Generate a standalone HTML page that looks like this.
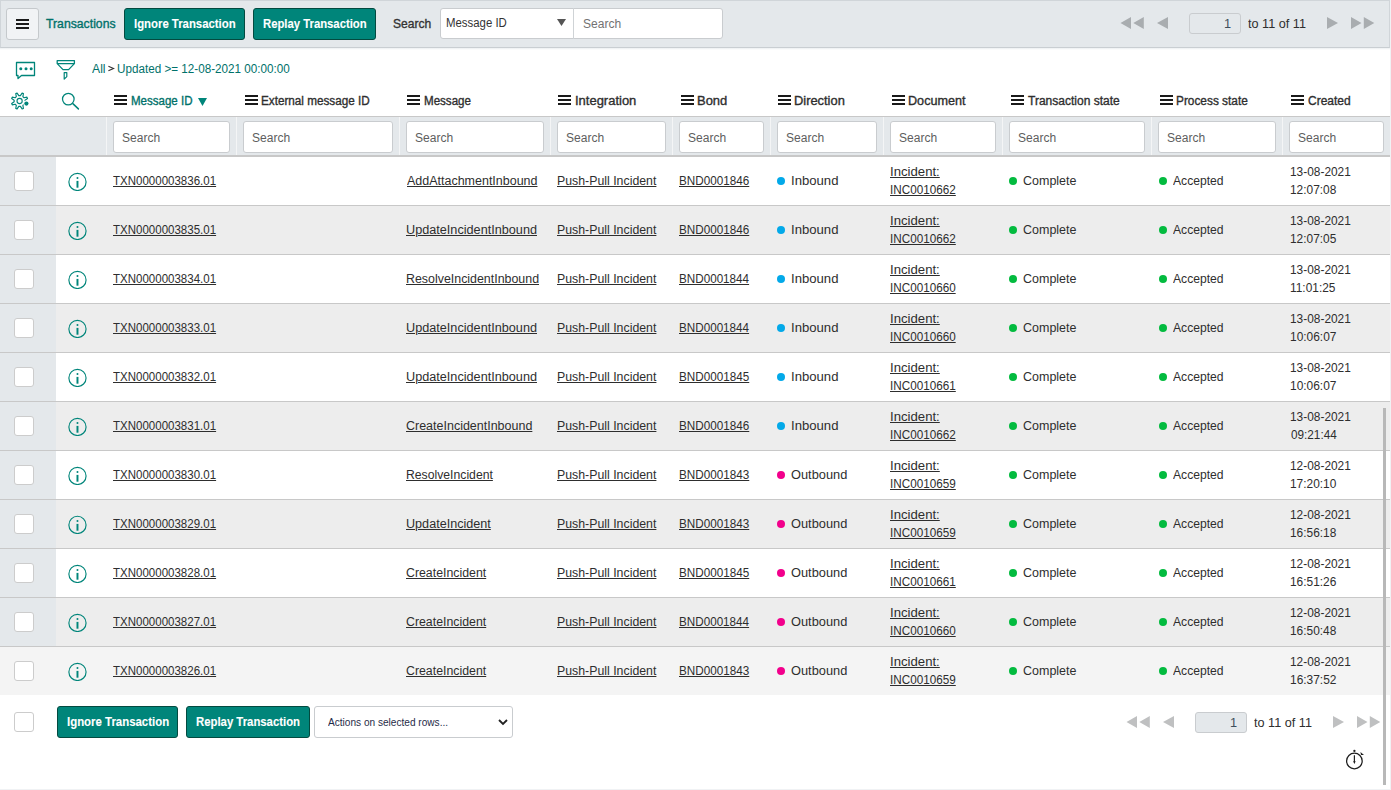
<!DOCTYPE html>
<html><head><meta charset="utf-8"><style>
html,body{margin:0;padding:0;width:1391px;height:790px;overflow:hidden;background:#fff}
body{position:relative;font-family:"Liberation Sans",sans-serif}
.t{position:absolute;white-space:nowrap;line-height:20px;transform-origin:0 0}
</style></head><body>
<div style="position:absolute;left:0px;top:0px;width:1391px;height:790px;background:#f0f2f4"></div>
<div style="position:absolute;left:0px;top:0px;width:1390px;height:789px;background:#fff"></div>
<div style="position:absolute;left:0px;top:0px;width:1390px;height:48px;background:#e4e8eb;border:1px solid #d0d5d9;box-sizing:border-box;border-bottom-color:#c9ced2"></div>
<div style="position:absolute;left:0px;top:48px;width:1390px;height:2px;background:linear-gradient(#eceff1,#fff)"></div>
<div style="position:absolute;left:6px;top:8px;width:33px;height:32px;background:#f1f3f5;border:1px solid #c5c9cc;border-radius:3px;box-sizing:border-box"></div>
<div style="position:absolute;left:16px;top:19px;width:13px;height:2px;background:#1a1a1a"></div>
<div style="position:absolute;left:16px;top:23px;width:13px;height:2px;background:#1a1a1a"></div>
<div style="position:absolute;left:16px;top:27px;width:13px;height:2px;background:#1a1a1a"></div>
<div class="t" style="left:45.5px;top:14px;font-size:12.5px;font-weight:normal;color:#00716a;transform:scaleX(0.9785);-webkit-text-stroke:0.35px #00716a;">Transactions</div>
<div style="position:absolute;left:124px;top:8px;width:121px;height:32px;background:#00857a;border:1px solid #034a40;border-radius:3px;box-sizing:border-box"></div>
<div class="t" style="left:133.5px;top:14px;font-size:12.5px;font-weight:bold;color:#fff;transform:scaleX(0.9089);-webkit-text-stroke:0.1px #fff;">Ignore Transaction</div>
<div style="position:absolute;left:253px;top:8px;width:123px;height:32px;background:#00857a;border:1px solid #034a40;border-radius:3px;box-sizing:border-box"></div>
<div class="t" style="left:262.9px;top:14px;font-size:12.5px;font-weight:bold;color:#fff;transform:scaleX(0.9041);-webkit-text-stroke:0.1px #fff;">Replay Transaction</div>
<div class="t" style="left:393.1px;top:14px;font-size:12.5px;font-weight:normal;color:#333;transform:scaleX(0.9653);-webkit-text-stroke:0.35px #333;">Search</div>
<div style="position:absolute;left:440px;top:8px;width:283px;height:31px;background:#fff;border:1px solid #c9cccf;border-radius:3px;box-sizing:border-box"></div>
<div style="position:absolute;left:573px;top:8px;width:1px;height:31px;background:#cfd3d6"></div>
<div class="t" style="left:445.6px;top:13px;font-size:12.5px;font-weight:normal;color:#333;transform:scaleX(0.9113);">Message ID</div>
<svg style="position:absolute;left:557px;top:19px" width="9" height="8"><path d="M0 0H9L4.5 7Z" fill="#555"/></svg>
<div class="t" style="left:582.5px;top:14px;font-size:12.5px;font-weight:normal;color:#727272;transform:scaleX(0.9627);">Search</div>
<svg style="position:absolute;left:1120px;top:17px" width="25" height="12"><path d="M0.5 6L11 0V12Z M13.3 6L23.8 0V12Z" fill="#a9adb0"/></svg>
<svg style="position:absolute;left:1157px;top:17px" width="11" height="12"><path d="M0 6L11 0V12Z" fill="#a9adb0"/></svg>
<div style="position:absolute;left:1189px;top:13px;width:52px;height:21px;background:#e4e8eb;border:1px solid #c9cccf;border-radius:3px;box-sizing:border-box"></div>
<div class="t" style="left:1223.5px;top:14px;font-size:12.5px;font-weight:normal;color:#3d4f5c;transform:scaleX(1.0205);">1</div>
<div class="t" style="left:1248.3px;top:14px;font-size:12.5px;font-weight:normal;color:#2e2e2e;transform:scaleX(1.0124);">to 11 of 11</div>
<svg style="position:absolute;left:1327px;top:17px" width="11" height="12"><path d="M11 6L0 0V12Z" fill="#a9adb0"/></svg>
<svg style="position:absolute;left:1351px;top:17px" width="25" height="12"><path d="M10.5 6L0 0V12Z M23.3 6L12.8 0V12Z" fill="#a9adb0"/></svg>
<svg style="position:absolute;left:15px;top:61px" width="22" height="19" viewBox="0 0 22 19">
<path d="M1.5 1.5H19.5V14.5H6.5L3 17.5V14.5H1.5Z" fill="none" stroke="#00857a" stroke-width="1.3" stroke-linejoin="round"/>
<circle cx="5.8" cy="7.7" r="1.5" fill="#00857a"/><circle cx="11" cy="7.7" r="1.5" fill="#00857a"/><circle cx="16.2" cy="7.7" r="1.5" fill="#00857a"/></svg>
<svg style="position:absolute;left:56px;top:59px" width="20" height="22" viewBox="0 0 20 22">
<path d="M1.2 1.6H18.4V4.6L12.6 10.6H7L1.2 4.6Z M1.2 4.6H18.4" fill="none" stroke="#00857a" stroke-width="1.3" stroke-linejoin="round"/>
<path d="M8.2 13.6H10.8V17.6L8.2 20.2Z" fill="none" stroke="#00857a" stroke-width="1.2" stroke-linejoin="round"/></svg>
<div class="t" style="left:92.4px;top:59px;font-size:12.5px;font-weight:normal;color:#00716a;transform:scaleX(0.9746);">All</div>
<svg style="position:absolute;left:107px;top:64px" width="9" height="9"><path d="M1.4 2.3L6.5 4.5L1.4 6.7" fill="none" stroke="#333" stroke-width="1.15"/></svg>
<div class="t" style="left:116.6px;top:59px;font-size:12.5px;font-weight:normal;color:#00716a;transform:scaleX(0.9350);">Updated &gt;= 12-08-2021 00:00:00</div>
<svg style="position:absolute;left:9px;top:91px" width="21" height="20" viewBox="0 0 21 20">
<path d="M11.41 4.56 L13.10 2.08 L14.43 2.64 L13.87 5.58 L15.02 6.73 L17.96 6.17 L18.52 7.50 L16.04 9.19 L16.04 10.81 L18.52 12.50 L17.96 13.83 L15.02 13.27 L13.87 14.42 L14.43 17.36 L13.10 17.92 L11.41 15.44 L9.79 15.44 L8.10 17.92 L6.77 17.36 L7.33 14.42 L6.18 13.27 L3.24 13.83 L2.68 12.50 L5.16 10.81 L5.16 9.19 L2.68 7.50 L3.24 6.17 L6.18 6.73 L7.33 5.58 L6.77 2.64 L8.10 2.08 L9.79 4.56Z" fill="none" stroke="#00857a" stroke-width="1.15" stroke-linejoin="round"/>
<circle cx="10.6" cy="10" r="2.6" fill="none" stroke="#00857a" stroke-width="1.1"/>
<circle cx="17.4" cy="12.6" r="3.1" fill="#fff"/><circle cx="17.4" cy="12.6" r="2.1" fill="#00857a"/></svg>
<svg style="position:absolute;left:60px;top:91px" width="22" height="20" viewBox="0 0 22 20">
<circle cx="8.3" cy="8.1" r="5.8" fill="none" stroke="#00857a" stroke-width="1.25"/>
<path d="M13.1 12.9L18.4 17.9" stroke="#00857a" stroke-width="1.5" stroke-linecap="round"/></svg>
<div style="position:absolute;left:114px;top:95px;width:13px;height:2px;background:#1a1a1a"></div>
<div style="position:absolute;left:114px;top:99px;width:13px;height:2px;background:#1a1a1a"></div>
<div style="position:absolute;left:114px;top:103px;width:13px;height:2px;background:#1a1a1a"></div>
<div class="t" style="left:130.6px;top:91px;font-size:12.5px;font-weight:normal;color:#00716a;transform:scaleX(0.9221);-webkit-text-stroke:0.35px #00716a;">Message ID</div>
<div style="position:absolute;left:245px;top:95px;width:13px;height:2px;background:#1a1a1a"></div>
<div style="position:absolute;left:245px;top:99px;width:13px;height:2px;background:#1a1a1a"></div>
<div style="position:absolute;left:245px;top:103px;width:13px;height:2px;background:#1a1a1a"></div>
<div class="t" style="left:261.0px;top:91px;font-size:12.5px;font-weight:normal;color:#2e2e2e;transform:scaleX(0.9371);-webkit-text-stroke:0.35px #2e2e2e;">External message ID</div>
<div style="position:absolute;left:407px;top:95px;width:13px;height:2px;background:#1a1a1a"></div>
<div style="position:absolute;left:407px;top:99px;width:13px;height:2px;background:#1a1a1a"></div>
<div style="position:absolute;left:407px;top:103px;width:13px;height:2px;background:#1a1a1a"></div>
<div class="t" style="left:423.6px;top:91px;font-size:12.5px;font-weight:normal;color:#2e2e2e;transform:scaleX(0.9259);-webkit-text-stroke:0.35px #2e2e2e;">Message</div>
<div style="position:absolute;left:558px;top:95px;width:13px;height:2px;background:#1a1a1a"></div>
<div style="position:absolute;left:558px;top:99px;width:13px;height:2px;background:#1a1a1a"></div>
<div style="position:absolute;left:558px;top:103px;width:13px;height:2px;background:#1a1a1a"></div>
<div class="t" style="left:574.5px;top:91px;font-size:12.5px;font-weight:normal;color:#2e2e2e;transform:scaleX(1.0384);-webkit-text-stroke:0.35px #2e2e2e;">Integration</div>
<div style="position:absolute;left:681px;top:95px;width:13px;height:2px;background:#1a1a1a"></div>
<div style="position:absolute;left:681px;top:99px;width:13px;height:2px;background:#1a1a1a"></div>
<div style="position:absolute;left:681px;top:103px;width:13px;height:2px;background:#1a1a1a"></div>
<div class="t" style="left:696.6px;top:91px;font-size:12.5px;font-weight:normal;color:#2e2e2e;transform:scaleX(1.0379);-webkit-text-stroke:0.35px #2e2e2e;">Bond</div>
<div style="position:absolute;left:778px;top:95px;width:13px;height:2px;background:#1a1a1a"></div>
<div style="position:absolute;left:778px;top:99px;width:13px;height:2px;background:#1a1a1a"></div>
<div style="position:absolute;left:778px;top:103px;width:13px;height:2px;background:#1a1a1a"></div>
<div class="t" style="left:794.2px;top:91px;font-size:12.5px;font-weight:normal;color:#2e2e2e;transform:scaleX(1.0298);-webkit-text-stroke:0.35px #2e2e2e;">Direction</div>
<div style="position:absolute;left:892px;top:95px;width:13px;height:2px;background:#1a1a1a"></div>
<div style="position:absolute;left:892px;top:99px;width:13px;height:2px;background:#1a1a1a"></div>
<div style="position:absolute;left:892px;top:103px;width:13px;height:2px;background:#1a1a1a"></div>
<div class="t" style="left:907.6px;top:91px;font-size:12.5px;font-weight:normal;color:#2e2e2e;transform:scaleX(1.0098);-webkit-text-stroke:0.35px #2e2e2e;">Document</div>
<div style="position:absolute;left:1011px;top:95px;width:13px;height:2px;background:#1a1a1a"></div>
<div style="position:absolute;left:1011px;top:99px;width:13px;height:2px;background:#1a1a1a"></div>
<div style="position:absolute;left:1011px;top:103px;width:13px;height:2px;background:#1a1a1a"></div>
<div class="t" style="left:1028.0px;top:91px;font-size:12.5px;font-weight:normal;color:#2e2e2e;transform:scaleX(0.9617);-webkit-text-stroke:0.35px #2e2e2e;">Transaction state</div>
<div style="position:absolute;left:1160px;top:95px;width:13px;height:2px;background:#1a1a1a"></div>
<div style="position:absolute;left:1160px;top:99px;width:13px;height:2px;background:#1a1a1a"></div>
<div style="position:absolute;left:1160px;top:103px;width:13px;height:2px;background:#1a1a1a"></div>
<div class="t" style="left:1176.2px;top:91px;font-size:12.5px;font-weight:normal;color:#2e2e2e;transform:scaleX(0.9481);-webkit-text-stroke:0.35px #2e2e2e;">Process state</div>
<div style="position:absolute;left:1291px;top:95px;width:13px;height:2px;background:#1a1a1a"></div>
<div style="position:absolute;left:1291px;top:99px;width:13px;height:2px;background:#1a1a1a"></div>
<div style="position:absolute;left:1291px;top:103px;width:13px;height:2px;background:#1a1a1a"></div>
<div class="t" style="left:1307.5px;top:91px;font-size:12.5px;font-weight:normal;color:#2e2e2e;transform:scaleX(0.9598);-webkit-text-stroke:0.35px #2e2e2e;">Created</div>
<svg style="position:absolute;left:198px;top:98px" width="9" height="8"><path d="M0 0H9L4.5 8Z" fill="#00857a"/></svg>
<div style="position:absolute;left:0px;top:116px;width:1390px;height:1px;background:#c8c8c8"></div>
<div style="position:absolute;left:0px;top:117px;width:1390px;height:38px;background:#e4e8eb"></div>
<div style="position:absolute;left:0px;top:155px;width:1390px;height:2px;background:#c8c8c8"></div>
<div style="position:absolute;left:106px;top:117px;width:1px;height:38px;background:#f4f5f6"></div>
<div style="position:absolute;left:113px;top:121px;width:117px;height:32px;background:#fff;border:1px solid #c9cccf;border-radius:3px;box-sizing:border-box"></div>
<div class="t" style="left:122.3px;top:128px;font-size:12.5px;font-weight:normal;color:#5e5e5e;transform:scaleX(0.9627);">Search</div>
<div style="position:absolute;left:236px;top:117px;width:1px;height:38px;background:#f4f5f6"></div>
<div style="position:absolute;left:243px;top:121px;width:150px;height:32px;background:#fff;border:1px solid #c9cccf;border-radius:3px;box-sizing:border-box"></div>
<div class="t" style="left:252.3px;top:128px;font-size:12.5px;font-weight:normal;color:#5e5e5e;transform:scaleX(0.9627);">Search</div>
<div style="position:absolute;left:399px;top:117px;width:1px;height:38px;background:#f4f5f6"></div>
<div style="position:absolute;left:406px;top:121px;width:138px;height:32px;background:#fff;border:1px solid #c9cccf;border-radius:3px;box-sizing:border-box"></div>
<div class="t" style="left:415.3px;top:128px;font-size:12.5px;font-weight:normal;color:#5e5e5e;transform:scaleX(0.9627);">Search</div>
<div style="position:absolute;left:550px;top:117px;width:1px;height:38px;background:#f4f5f6"></div>
<div style="position:absolute;left:557px;top:121px;width:109px;height:32px;background:#fff;border:1px solid #c9cccf;border-radius:3px;box-sizing:border-box"></div>
<div class="t" style="left:566.3px;top:128px;font-size:12.5px;font-weight:normal;color:#5e5e5e;transform:scaleX(0.9627);">Search</div>
<div style="position:absolute;left:672px;top:117px;width:1px;height:38px;background:#f4f5f6"></div>
<div style="position:absolute;left:679px;top:121px;width:85px;height:32px;background:#fff;border:1px solid #c9cccf;border-radius:3px;box-sizing:border-box"></div>
<div class="t" style="left:688.3px;top:128px;font-size:12.5px;font-weight:normal;color:#5e5e5e;transform:scaleX(0.9627);">Search</div>
<div style="position:absolute;left:770px;top:117px;width:1px;height:38px;background:#f4f5f6"></div>
<div style="position:absolute;left:777px;top:121px;width:100px;height:32px;background:#fff;border:1px solid #c9cccf;border-radius:3px;box-sizing:border-box"></div>
<div class="t" style="left:786.3px;top:128px;font-size:12.5px;font-weight:normal;color:#5e5e5e;transform:scaleX(0.9627);">Search</div>
<div style="position:absolute;left:883px;top:117px;width:1px;height:38px;background:#f4f5f6"></div>
<div style="position:absolute;left:890px;top:121px;width:106px;height:32px;background:#fff;border:1px solid #c9cccf;border-radius:3px;box-sizing:border-box"></div>
<div class="t" style="left:899.3px;top:128px;font-size:12.5px;font-weight:normal;color:#5e5e5e;transform:scaleX(0.9627);">Search</div>
<div style="position:absolute;left:1002px;top:117px;width:1px;height:38px;background:#f4f5f6"></div>
<div style="position:absolute;left:1009px;top:121px;width:136px;height:32px;background:#fff;border:1px solid #c9cccf;border-radius:3px;box-sizing:border-box"></div>
<div class="t" style="left:1018.3px;top:128px;font-size:12.5px;font-weight:normal;color:#5e5e5e;transform:scaleX(0.9627);">Search</div>
<div style="position:absolute;left:1151px;top:117px;width:1px;height:38px;background:#f4f5f6"></div>
<div style="position:absolute;left:1158px;top:121px;width:118px;height:32px;background:#fff;border:1px solid #c9cccf;border-radius:3px;box-sizing:border-box"></div>
<div class="t" style="left:1167.3px;top:128px;font-size:12.5px;font-weight:normal;color:#5e5e5e;transform:scaleX(0.9627);">Search</div>
<div style="position:absolute;left:1282px;top:117px;width:1px;height:38px;background:#f4f5f6"></div>
<div style="position:absolute;left:1289px;top:121px;width:95px;height:32px;background:#fff;border:1px solid #c9cccf;border-radius:3px;box-sizing:border-box"></div>
<div class="t" style="left:1298.3px;top:128px;font-size:12.5px;font-weight:normal;color:#5e5e5e;transform:scaleX(0.9627);">Search</div>
<div style="position:absolute;left:0px;top:157px;width:56px;height:48px;background:#e4e8eb"></div>
<div style="position:absolute;left:56px;top:157px;width:1334px;height:48px;background:#ffffff"></div>
<div style="position:absolute;left:0px;top:205px;width:1390px;height:1px;background:#c8c8c8"></div>
<div style="position:absolute;left:14px;top:171px;width:20px;height:20px;background:#fff;border:1px solid #cccccc;border-radius:3px;box-sizing:border-box"></div>
<svg style="position:absolute;left:68px;top:172px" width="19" height="19" viewBox="0 0 19 19">
<circle cx="9.47" cy="9.9" r="8.6" fill="none" stroke="#00857a" stroke-width="1.15"/>
<circle cx="9.47" cy="6.0" r="1.0" fill="#00857a"/><rect x="8.5" y="8.9" width="1.95" height="6.8" fill="#00857a"/></svg>
<div class="t" style="left:112.7px;top:171px;font-size:12.5px;font-weight:normal;color:#2e2e2e;transform:scaleX(0.9213);text-decoration:underline;">TXN0000003836.01</div>
<div class="t" style="left:406.6px;top:171px;font-size:12.5px;font-weight:normal;color:#2e2e2e;transform:scaleX(0.9986);text-decoration:underline;">AddAttachmentInbound</div>
<div class="t" style="left:557.0px;top:171px;font-size:12.5px;font-weight:normal;color:#2e2e2e;transform:scaleX(0.9864);text-decoration:underline;">Push-Pull Incident</div>
<div class="t" style="left:678.8px;top:171px;font-size:12.5px;font-weight:normal;color:#2e2e2e;transform:scaleX(0.9362);text-decoration:underline;">BND0001846</div>
<div style="position:absolute;left:777px;top:177px;width:8px;height:8px;background:#03a9e9;border-radius:50%"></div>
<div class="t" style="left:790.8px;top:171px;font-size:12.5px;font-weight:normal;color:#2e2e2e;transform:scaleX(1.0509);">Inbound</div>
<div class="t" style="left:889.8px;top:162px;font-size:12.5px;font-weight:normal;color:#2e2e2e;transform:scaleX(1.0532);text-decoration:underline;">Incident:</div>
<div class="t" style="left:889.9px;top:180px;font-size:12.5px;font-weight:normal;color:#2e2e2e;transform:scaleX(0.9375);text-decoration:underline;">INC0010662</div>
<div style="position:absolute;left:1009px;top:177px;width:8px;height:8px;background:#03bb3f;border-radius:50%"></div>
<div class="t" style="left:1023.3px;top:171px;font-size:12.5px;font-weight:normal;color:#2e2e2e;transform:scaleX(0.9995);">Complete</div>
<div style="position:absolute;left:1159px;top:177px;width:8px;height:8px;background:#03bb3f;border-radius:50%"></div>
<div class="t" style="left:1172.8px;top:171px;font-size:12.5px;font-weight:normal;color:#2e2e2e;transform:scaleX(0.9710);">Accepted</div>
<div class="t" style="left:1290.3px;top:162px;font-size:12.5px;font-weight:normal;color:#2e2e2e;transform:scaleX(0.9515);">13-08-2021</div>
<div class="t" style="left:1290.3px;top:180px;font-size:12.5px;font-weight:normal;color:#2e2e2e;transform:scaleX(0.9525);">12:07:08</div>
<div style="position:absolute;left:0px;top:206px;width:56px;height:48px;background:#e4e8eb"></div>
<div style="position:absolute;left:56px;top:206px;width:1334px;height:48px;background:#ededed"></div>
<div style="position:absolute;left:0px;top:254px;width:1390px;height:1px;background:#c8c8c8"></div>
<div style="position:absolute;left:14px;top:220px;width:20px;height:20px;background:#fff;border:1px solid #cccccc;border-radius:3px;box-sizing:border-box"></div>
<svg style="position:absolute;left:68px;top:221px" width="19" height="19" viewBox="0 0 19 19">
<circle cx="9.47" cy="9.9" r="8.6" fill="none" stroke="#00857a" stroke-width="1.15"/>
<circle cx="9.47" cy="6.0" r="1.0" fill="#00857a"/><rect x="8.5" y="8.9" width="1.95" height="6.8" fill="#00857a"/></svg>
<div class="t" style="left:112.7px;top:220px;font-size:12.5px;font-weight:normal;color:#2e2e2e;transform:scaleX(0.9213);text-decoration:underline;">TXN0000003835.01</div>
<div class="t" style="left:405.6px;top:220px;font-size:12.5px;font-weight:normal;color:#2e2e2e;transform:scaleX(1.0132);text-decoration:underline;">UpdateIncidentInbound</div>
<div class="t" style="left:557.0px;top:220px;font-size:12.5px;font-weight:normal;color:#2e2e2e;transform:scaleX(0.9864);text-decoration:underline;">Push-Pull Incident</div>
<div class="t" style="left:678.8px;top:220px;font-size:12.5px;font-weight:normal;color:#2e2e2e;transform:scaleX(0.9362);text-decoration:underline;">BND0001846</div>
<div style="position:absolute;left:777px;top:226px;width:8px;height:8px;background:#03a9e9;border-radius:50%"></div>
<div class="t" style="left:790.8px;top:220px;font-size:12.5px;font-weight:normal;color:#2e2e2e;transform:scaleX(1.0509);">Inbound</div>
<div class="t" style="left:889.8px;top:211px;font-size:12.5px;font-weight:normal;color:#2e2e2e;transform:scaleX(1.0532);text-decoration:underline;">Incident:</div>
<div class="t" style="left:889.9px;top:229px;font-size:12.5px;font-weight:normal;color:#2e2e2e;transform:scaleX(0.9375);text-decoration:underline;">INC0010662</div>
<div style="position:absolute;left:1009px;top:226px;width:8px;height:8px;background:#03bb3f;border-radius:50%"></div>
<div class="t" style="left:1023.3px;top:220px;font-size:12.5px;font-weight:normal;color:#2e2e2e;transform:scaleX(0.9995);">Complete</div>
<div style="position:absolute;left:1159px;top:226px;width:8px;height:8px;background:#03bb3f;border-radius:50%"></div>
<div class="t" style="left:1172.8px;top:220px;font-size:12.5px;font-weight:normal;color:#2e2e2e;transform:scaleX(0.9710);">Accepted</div>
<div class="t" style="left:1290.3px;top:211px;font-size:12.5px;font-weight:normal;color:#2e2e2e;transform:scaleX(0.9515);">13-08-2021</div>
<div class="t" style="left:1290.3px;top:229px;font-size:12.5px;font-weight:normal;color:#2e2e2e;transform:scaleX(0.9522);">12:07:05</div>
<div style="position:absolute;left:0px;top:255px;width:56px;height:48px;background:#e4e8eb"></div>
<div style="position:absolute;left:56px;top:255px;width:1334px;height:48px;background:#ffffff"></div>
<div style="position:absolute;left:0px;top:303px;width:1390px;height:1px;background:#c8c8c8"></div>
<div style="position:absolute;left:14px;top:269px;width:20px;height:20px;background:#fff;border:1px solid #cccccc;border-radius:3px;box-sizing:border-box"></div>
<svg style="position:absolute;left:68px;top:270px" width="19" height="19" viewBox="0 0 19 19">
<circle cx="9.47" cy="9.9" r="8.6" fill="none" stroke="#00857a" stroke-width="1.15"/>
<circle cx="9.47" cy="6.0" r="1.0" fill="#00857a"/><rect x="8.5" y="8.9" width="1.95" height="6.8" fill="#00857a"/></svg>
<div class="t" style="left:112.7px;top:269px;font-size:12.5px;font-weight:normal;color:#2e2e2e;transform:scaleX(0.9213);text-decoration:underline;">TXN0000003834.01</div>
<div class="t" style="left:405.6px;top:269px;font-size:12.5px;font-weight:normal;color:#2e2e2e;transform:scaleX(0.9918);text-decoration:underline;">ResolveIncidentInbound</div>
<div class="t" style="left:557.0px;top:269px;font-size:12.5px;font-weight:normal;color:#2e2e2e;transform:scaleX(0.9864);text-decoration:underline;">Push-Pull Incident</div>
<div class="t" style="left:678.8px;top:269px;font-size:12.5px;font-weight:normal;color:#2e2e2e;transform:scaleX(0.9339);text-decoration:underline;">BND0001844</div>
<div style="position:absolute;left:777px;top:275px;width:8px;height:8px;background:#03a9e9;border-radius:50%"></div>
<div class="t" style="left:790.8px;top:269px;font-size:12.5px;font-weight:normal;color:#2e2e2e;transform:scaleX(1.0509);">Inbound</div>
<div class="t" style="left:889.8px;top:260px;font-size:12.5px;font-weight:normal;color:#2e2e2e;transform:scaleX(1.0532);text-decoration:underline;">Incident:</div>
<div class="t" style="left:889.9px;top:278px;font-size:12.5px;font-weight:normal;color:#2e2e2e;transform:scaleX(0.9356);text-decoration:underline;">INC0010660</div>
<div style="position:absolute;left:1009px;top:275px;width:8px;height:8px;background:#03bb3f;border-radius:50%"></div>
<div class="t" style="left:1023.3px;top:269px;font-size:12.5px;font-weight:normal;color:#2e2e2e;transform:scaleX(0.9995);">Complete</div>
<div style="position:absolute;left:1159px;top:275px;width:8px;height:8px;background:#03bb3f;border-radius:50%"></div>
<div class="t" style="left:1172.8px;top:269px;font-size:12.5px;font-weight:normal;color:#2e2e2e;transform:scaleX(0.9710);">Accepted</div>
<div class="t" style="left:1290.3px;top:260px;font-size:12.5px;font-weight:normal;color:#2e2e2e;transform:scaleX(0.9515);">13-08-2021</div>
<div class="t" style="left:1290.3px;top:278px;font-size:12.5px;font-weight:normal;color:#2e2e2e;transform:scaleX(0.9522);">11:01:25</div>
<div style="position:absolute;left:0px;top:304px;width:56px;height:48px;background:#e4e8eb"></div>
<div style="position:absolute;left:56px;top:304px;width:1334px;height:48px;background:#ededed"></div>
<div style="position:absolute;left:0px;top:352px;width:1390px;height:1px;background:#c8c8c8"></div>
<div style="position:absolute;left:14px;top:318px;width:20px;height:20px;background:#fff;border:1px solid #cccccc;border-radius:3px;box-sizing:border-box"></div>
<svg style="position:absolute;left:68px;top:319px" width="19" height="19" viewBox="0 0 19 19">
<circle cx="9.47" cy="9.9" r="8.6" fill="none" stroke="#00857a" stroke-width="1.15"/>
<circle cx="9.47" cy="6.0" r="1.0" fill="#00857a"/><rect x="8.5" y="8.9" width="1.95" height="6.8" fill="#00857a"/></svg>
<div class="t" style="left:112.7px;top:318px;font-size:12.5px;font-weight:normal;color:#2e2e2e;transform:scaleX(0.9213);text-decoration:underline;">TXN0000003833.01</div>
<div class="t" style="left:405.6px;top:318px;font-size:12.5px;font-weight:normal;color:#2e2e2e;transform:scaleX(1.0132);text-decoration:underline;">UpdateIncidentInbound</div>
<div class="t" style="left:557.0px;top:318px;font-size:12.5px;font-weight:normal;color:#2e2e2e;transform:scaleX(0.9864);text-decoration:underline;">Push-Pull Incident</div>
<div class="t" style="left:678.8px;top:318px;font-size:12.5px;font-weight:normal;color:#2e2e2e;transform:scaleX(0.9339);text-decoration:underline;">BND0001844</div>
<div style="position:absolute;left:777px;top:324px;width:8px;height:8px;background:#03a9e9;border-radius:50%"></div>
<div class="t" style="left:790.8px;top:318px;font-size:12.5px;font-weight:normal;color:#2e2e2e;transform:scaleX(1.0509);">Inbound</div>
<div class="t" style="left:889.8px;top:309px;font-size:12.5px;font-weight:normal;color:#2e2e2e;transform:scaleX(1.0532);text-decoration:underline;">Incident:</div>
<div class="t" style="left:889.9px;top:327px;font-size:12.5px;font-weight:normal;color:#2e2e2e;transform:scaleX(0.9356);text-decoration:underline;">INC0010660</div>
<div style="position:absolute;left:1009px;top:324px;width:8px;height:8px;background:#03bb3f;border-radius:50%"></div>
<div class="t" style="left:1023.3px;top:318px;font-size:12.5px;font-weight:normal;color:#2e2e2e;transform:scaleX(0.9995);">Complete</div>
<div style="position:absolute;left:1159px;top:324px;width:8px;height:8px;background:#03bb3f;border-radius:50%"></div>
<div class="t" style="left:1172.8px;top:318px;font-size:12.5px;font-weight:normal;color:#2e2e2e;transform:scaleX(0.9710);">Accepted</div>
<div class="t" style="left:1290.3px;top:309px;font-size:12.5px;font-weight:normal;color:#2e2e2e;transform:scaleX(0.9515);">13-08-2021</div>
<div class="t" style="left:1290.3px;top:327px;font-size:12.5px;font-weight:normal;color:#2e2e2e;transform:scaleX(0.9543);">10:06:07</div>
<div style="position:absolute;left:0px;top:353px;width:56px;height:48px;background:#e4e8eb"></div>
<div style="position:absolute;left:56px;top:353px;width:1334px;height:48px;background:#ffffff"></div>
<div style="position:absolute;left:0px;top:401px;width:1390px;height:1px;background:#c8c8c8"></div>
<div style="position:absolute;left:14px;top:367px;width:20px;height:20px;background:#fff;border:1px solid #cccccc;border-radius:3px;box-sizing:border-box"></div>
<svg style="position:absolute;left:68px;top:368px" width="19" height="19" viewBox="0 0 19 19">
<circle cx="9.47" cy="9.9" r="8.6" fill="none" stroke="#00857a" stroke-width="1.15"/>
<circle cx="9.47" cy="6.0" r="1.0" fill="#00857a"/><rect x="8.5" y="8.9" width="1.95" height="6.8" fill="#00857a"/></svg>
<div class="t" style="left:112.7px;top:367px;font-size:12.5px;font-weight:normal;color:#2e2e2e;transform:scaleX(0.9213);text-decoration:underline;">TXN0000003832.01</div>
<div class="t" style="left:405.6px;top:367px;font-size:12.5px;font-weight:normal;color:#2e2e2e;transform:scaleX(1.0132);text-decoration:underline;">UpdateIncidentInbound</div>
<div class="t" style="left:557.0px;top:367px;font-size:12.5px;font-weight:normal;color:#2e2e2e;transform:scaleX(0.9864);text-decoration:underline;">Push-Pull Incident</div>
<div class="t" style="left:678.8px;top:367px;font-size:12.5px;font-weight:normal;color:#2e2e2e;transform:scaleX(0.9359);text-decoration:underline;">BND0001845</div>
<div style="position:absolute;left:777px;top:373px;width:8px;height:8px;background:#03a9e9;border-radius:50%"></div>
<div class="t" style="left:790.8px;top:367px;font-size:12.5px;font-weight:normal;color:#2e2e2e;transform:scaleX(1.0509);">Inbound</div>
<div class="t" style="left:889.8px;top:358px;font-size:12.5px;font-weight:normal;color:#2e2e2e;transform:scaleX(1.0532);text-decoration:underline;">Incident:</div>
<div class="t" style="left:889.9px;top:376px;font-size:12.5px;font-weight:normal;color:#2e2e2e;transform:scaleX(0.9372);text-decoration:underline;">INC0010661</div>
<div style="position:absolute;left:1009px;top:373px;width:8px;height:8px;background:#03bb3f;border-radius:50%"></div>
<div class="t" style="left:1023.3px;top:367px;font-size:12.5px;font-weight:normal;color:#2e2e2e;transform:scaleX(0.9995);">Complete</div>
<div style="position:absolute;left:1159px;top:373px;width:8px;height:8px;background:#03bb3f;border-radius:50%"></div>
<div class="t" style="left:1172.8px;top:367px;font-size:12.5px;font-weight:normal;color:#2e2e2e;transform:scaleX(0.9710);">Accepted</div>
<div class="t" style="left:1290.3px;top:358px;font-size:12.5px;font-weight:normal;color:#2e2e2e;transform:scaleX(0.9515);">13-08-2021</div>
<div class="t" style="left:1290.3px;top:376px;font-size:12.5px;font-weight:normal;color:#2e2e2e;transform:scaleX(0.9543);">10:06:07</div>
<div style="position:absolute;left:0px;top:402px;width:56px;height:48px;background:#e4e8eb"></div>
<div style="position:absolute;left:56px;top:402px;width:1334px;height:48px;background:#ededed"></div>
<div style="position:absolute;left:0px;top:450px;width:1390px;height:1px;background:#c8c8c8"></div>
<div style="position:absolute;left:14px;top:416px;width:20px;height:20px;background:#fff;border:1px solid #cccccc;border-radius:3px;box-sizing:border-box"></div>
<svg style="position:absolute;left:68px;top:417px" width="19" height="19" viewBox="0 0 19 19">
<circle cx="9.47" cy="9.9" r="8.6" fill="none" stroke="#00857a" stroke-width="1.15"/>
<circle cx="9.47" cy="6.0" r="1.0" fill="#00857a"/><rect x="8.5" y="8.9" width="1.95" height="6.8" fill="#00857a"/></svg>
<div class="t" style="left:112.7px;top:416px;font-size:12.5px;font-weight:normal;color:#2e2e2e;transform:scaleX(0.9213);text-decoration:underline;">TXN0000003831.01</div>
<div class="t" style="left:406.0px;top:416px;font-size:12.5px;font-weight:normal;color:#2e2e2e;transform:scaleX(0.9989);text-decoration:underline;">CreateIncidentInbound</div>
<div class="t" style="left:557.0px;top:416px;font-size:12.5px;font-weight:normal;color:#2e2e2e;transform:scaleX(0.9864);text-decoration:underline;">Push-Pull Incident</div>
<div class="t" style="left:678.8px;top:416px;font-size:12.5px;font-weight:normal;color:#2e2e2e;transform:scaleX(0.9362);text-decoration:underline;">BND0001846</div>
<div style="position:absolute;left:777px;top:422px;width:8px;height:8px;background:#03a9e9;border-radius:50%"></div>
<div class="t" style="left:790.8px;top:416px;font-size:12.5px;font-weight:normal;color:#2e2e2e;transform:scaleX(1.0509);">Inbound</div>
<div class="t" style="left:889.8px;top:407px;font-size:12.5px;font-weight:normal;color:#2e2e2e;transform:scaleX(1.0532);text-decoration:underline;">Incident:</div>
<div class="t" style="left:889.9px;top:425px;font-size:12.5px;font-weight:normal;color:#2e2e2e;transform:scaleX(0.9375);text-decoration:underline;">INC0010662</div>
<div style="position:absolute;left:1009px;top:422px;width:8px;height:8px;background:#03bb3f;border-radius:50%"></div>
<div class="t" style="left:1023.3px;top:416px;font-size:12.5px;font-weight:normal;color:#2e2e2e;transform:scaleX(0.9995);">Complete</div>
<div style="position:absolute;left:1159px;top:422px;width:8px;height:8px;background:#03bb3f;border-radius:50%"></div>
<div class="t" style="left:1172.8px;top:416px;font-size:12.5px;font-weight:normal;color:#2e2e2e;transform:scaleX(0.9710);">Accepted</div>
<div class="t" style="left:1290.3px;top:407px;font-size:12.5px;font-weight:normal;color:#2e2e2e;transform:scaleX(0.9515);">13-08-2021</div>
<div class="t" style="left:1290.7px;top:425px;font-size:12.5px;font-weight:normal;color:#2e2e2e;transform:scaleX(0.9398);">09:21:44</div>
<div style="position:absolute;left:0px;top:451px;width:56px;height:48px;background:#e4e8eb"></div>
<div style="position:absolute;left:56px;top:451px;width:1334px;height:48px;background:#ffffff"></div>
<div style="position:absolute;left:0px;top:499px;width:1390px;height:1px;background:#c8c8c8"></div>
<div style="position:absolute;left:14px;top:465px;width:20px;height:20px;background:#fff;border:1px solid #cccccc;border-radius:3px;box-sizing:border-box"></div>
<svg style="position:absolute;left:68px;top:466px" width="19" height="19" viewBox="0 0 19 19">
<circle cx="9.47" cy="9.9" r="8.6" fill="none" stroke="#00857a" stroke-width="1.15"/>
<circle cx="9.47" cy="6.0" r="1.0" fill="#00857a"/><rect x="8.5" y="8.9" width="1.95" height="6.8" fill="#00857a"/></svg>
<div class="t" style="left:112.7px;top:465px;font-size:12.5px;font-weight:normal;color:#2e2e2e;transform:scaleX(0.9213);text-decoration:underline;">TXN0000003830.01</div>
<div class="t" style="left:405.6px;top:465px;font-size:12.5px;font-weight:normal;color:#2e2e2e;transform:scaleX(0.9767);text-decoration:underline;">ResolveIncident</div>
<div class="t" style="left:557.0px;top:465px;font-size:12.5px;font-weight:normal;color:#2e2e2e;transform:scaleX(0.9864);text-decoration:underline;">Push-Pull Incident</div>
<div class="t" style="left:678.8px;top:465px;font-size:12.5px;font-weight:normal;color:#2e2e2e;transform:scaleX(0.9362);text-decoration:underline;">BND0001843</div>
<div style="position:absolute;left:777px;top:471px;width:8px;height:8px;background:#f2008c;border-radius:50%"></div>
<div class="t" style="left:791.4px;top:465px;font-size:12.5px;font-weight:normal;color:#2e2e2e;transform:scaleX(1.0246);">Outbound</div>
<div class="t" style="left:889.8px;top:456px;font-size:12.5px;font-weight:normal;color:#2e2e2e;transform:scaleX(1.0532);text-decoration:underline;">Incident:</div>
<div class="t" style="left:889.9px;top:474px;font-size:12.5px;font-weight:normal;color:#2e2e2e;transform:scaleX(0.9370);text-decoration:underline;">INC0010659</div>
<div style="position:absolute;left:1009px;top:471px;width:8px;height:8px;background:#03bb3f;border-radius:50%"></div>
<div class="t" style="left:1023.3px;top:465px;font-size:12.5px;font-weight:normal;color:#2e2e2e;transform:scaleX(0.9995);">Complete</div>
<div style="position:absolute;left:1159px;top:471px;width:8px;height:8px;background:#03bb3f;border-radius:50%"></div>
<div class="t" style="left:1172.8px;top:465px;font-size:12.5px;font-weight:normal;color:#2e2e2e;transform:scaleX(0.9710);">Accepted</div>
<div class="t" style="left:1290.3px;top:456px;font-size:12.5px;font-weight:normal;color:#2e2e2e;transform:scaleX(0.9515);">12-08-2021</div>
<div class="t" style="left:1290.3px;top:474px;font-size:12.5px;font-weight:normal;color:#2e2e2e;transform:scaleX(0.9514);">17:20:10</div>
<div style="position:absolute;left:0px;top:500px;width:56px;height:48px;background:#e4e8eb"></div>
<div style="position:absolute;left:56px;top:500px;width:1334px;height:48px;background:#ededed"></div>
<div style="position:absolute;left:0px;top:548px;width:1390px;height:1px;background:#c8c8c8"></div>
<div style="position:absolute;left:14px;top:514px;width:20px;height:20px;background:#fff;border:1px solid #cccccc;border-radius:3px;box-sizing:border-box"></div>
<svg style="position:absolute;left:68px;top:515px" width="19" height="19" viewBox="0 0 19 19">
<circle cx="9.47" cy="9.9" r="8.6" fill="none" stroke="#00857a" stroke-width="1.15"/>
<circle cx="9.47" cy="6.0" r="1.0" fill="#00857a"/><rect x="8.5" y="8.9" width="1.95" height="6.8" fill="#00857a"/></svg>
<div class="t" style="left:112.7px;top:514px;font-size:12.5px;font-weight:normal;color:#2e2e2e;transform:scaleX(0.9213);text-decoration:underline;">TXN0000003829.01</div>
<div class="t" style="left:405.6px;top:514px;font-size:12.5px;font-weight:normal;color:#2e2e2e;transform:scaleX(1.0087);text-decoration:underline;">UpdateIncident</div>
<div class="t" style="left:557.0px;top:514px;font-size:12.5px;font-weight:normal;color:#2e2e2e;transform:scaleX(0.9864);text-decoration:underline;">Push-Pull Incident</div>
<div class="t" style="left:678.8px;top:514px;font-size:12.5px;font-weight:normal;color:#2e2e2e;transform:scaleX(0.9362);text-decoration:underline;">BND0001843</div>
<div style="position:absolute;left:777px;top:520px;width:8px;height:8px;background:#f2008c;border-radius:50%"></div>
<div class="t" style="left:791.4px;top:514px;font-size:12.5px;font-weight:normal;color:#2e2e2e;transform:scaleX(1.0246);">Outbound</div>
<div class="t" style="left:889.8px;top:505px;font-size:12.5px;font-weight:normal;color:#2e2e2e;transform:scaleX(1.0532);text-decoration:underline;">Incident:</div>
<div class="t" style="left:889.9px;top:523px;font-size:12.5px;font-weight:normal;color:#2e2e2e;transform:scaleX(0.9370);text-decoration:underline;">INC0010659</div>
<div style="position:absolute;left:1009px;top:520px;width:8px;height:8px;background:#03bb3f;border-radius:50%"></div>
<div class="t" style="left:1023.3px;top:514px;font-size:12.5px;font-weight:normal;color:#2e2e2e;transform:scaleX(0.9995);">Complete</div>
<div style="position:absolute;left:1159px;top:520px;width:8px;height:8px;background:#03bb3f;border-radius:50%"></div>
<div class="t" style="left:1172.8px;top:514px;font-size:12.5px;font-weight:normal;color:#2e2e2e;transform:scaleX(0.9710);">Accepted</div>
<div class="t" style="left:1290.3px;top:505px;font-size:12.5px;font-weight:normal;color:#2e2e2e;transform:scaleX(0.9515);">12-08-2021</div>
<div class="t" style="left:1290.3px;top:523px;font-size:12.5px;font-weight:normal;color:#2e2e2e;transform:scaleX(0.9525);">16:56:18</div>
<div style="position:absolute;left:0px;top:549px;width:56px;height:48px;background:#e4e8eb"></div>
<div style="position:absolute;left:56px;top:549px;width:1334px;height:48px;background:#ffffff"></div>
<div style="position:absolute;left:0px;top:597px;width:1390px;height:1px;background:#c8c8c8"></div>
<div style="position:absolute;left:14px;top:563px;width:20px;height:20px;background:#fff;border:1px solid #cccccc;border-radius:3px;box-sizing:border-box"></div>
<svg style="position:absolute;left:68px;top:564px" width="19" height="19" viewBox="0 0 19 19">
<circle cx="9.47" cy="9.9" r="8.6" fill="none" stroke="#00857a" stroke-width="1.15"/>
<circle cx="9.47" cy="6.0" r="1.0" fill="#00857a"/><rect x="8.5" y="8.9" width="1.95" height="6.8" fill="#00857a"/></svg>
<div class="t" style="left:112.7px;top:563px;font-size:12.5px;font-weight:normal;color:#2e2e2e;transform:scaleX(0.9213);text-decoration:underline;">TXN0000003828.01</div>
<div class="t" style="left:406.0px;top:563px;font-size:12.5px;font-weight:normal;color:#2e2e2e;transform:scaleX(0.9864);text-decoration:underline;">CreateIncident</div>
<div class="t" style="left:557.0px;top:563px;font-size:12.5px;font-weight:normal;color:#2e2e2e;transform:scaleX(0.9864);text-decoration:underline;">Push-Pull Incident</div>
<div class="t" style="left:678.8px;top:563px;font-size:12.5px;font-weight:normal;color:#2e2e2e;transform:scaleX(0.9359);text-decoration:underline;">BND0001845</div>
<div style="position:absolute;left:777px;top:569px;width:8px;height:8px;background:#f2008c;border-radius:50%"></div>
<div class="t" style="left:791.4px;top:563px;font-size:12.5px;font-weight:normal;color:#2e2e2e;transform:scaleX(1.0246);">Outbound</div>
<div class="t" style="left:889.8px;top:554px;font-size:12.5px;font-weight:normal;color:#2e2e2e;transform:scaleX(1.0532);text-decoration:underline;">Incident:</div>
<div class="t" style="left:889.9px;top:572px;font-size:12.5px;font-weight:normal;color:#2e2e2e;transform:scaleX(0.9372);text-decoration:underline;">INC0010661</div>
<div style="position:absolute;left:1009px;top:569px;width:8px;height:8px;background:#03bb3f;border-radius:50%"></div>
<div class="t" style="left:1023.3px;top:563px;font-size:12.5px;font-weight:normal;color:#2e2e2e;transform:scaleX(0.9995);">Complete</div>
<div style="position:absolute;left:1159px;top:569px;width:8px;height:8px;background:#03bb3f;border-radius:50%"></div>
<div class="t" style="left:1172.8px;top:563px;font-size:12.5px;font-weight:normal;color:#2e2e2e;transform:scaleX(0.9710);">Accepted</div>
<div class="t" style="left:1290.3px;top:554px;font-size:12.5px;font-weight:normal;color:#2e2e2e;transform:scaleX(0.9515);">12-08-2021</div>
<div class="t" style="left:1290.3px;top:572px;font-size:12.5px;font-weight:normal;color:#2e2e2e;transform:scaleX(0.9527);">16:51:26</div>
<div style="position:absolute;left:0px;top:598px;width:56px;height:48px;background:#e4e8eb"></div>
<div style="position:absolute;left:56px;top:598px;width:1334px;height:48px;background:#ededed"></div>
<div style="position:absolute;left:0px;top:646px;width:1390px;height:1px;background:#c8c8c8"></div>
<div style="position:absolute;left:14px;top:612px;width:20px;height:20px;background:#fff;border:1px solid #cccccc;border-radius:3px;box-sizing:border-box"></div>
<svg style="position:absolute;left:68px;top:613px" width="19" height="19" viewBox="0 0 19 19">
<circle cx="9.47" cy="9.9" r="8.6" fill="none" stroke="#00857a" stroke-width="1.15"/>
<circle cx="9.47" cy="6.0" r="1.0" fill="#00857a"/><rect x="8.5" y="8.9" width="1.95" height="6.8" fill="#00857a"/></svg>
<div class="t" style="left:112.7px;top:612px;font-size:12.5px;font-weight:normal;color:#2e2e2e;transform:scaleX(0.9213);text-decoration:underline;">TXN0000003827.01</div>
<div class="t" style="left:406.0px;top:612px;font-size:12.5px;font-weight:normal;color:#2e2e2e;transform:scaleX(0.9864);text-decoration:underline;">CreateIncident</div>
<div class="t" style="left:557.0px;top:612px;font-size:12.5px;font-weight:normal;color:#2e2e2e;transform:scaleX(0.9864);text-decoration:underline;">Push-Pull Incident</div>
<div class="t" style="left:678.8px;top:612px;font-size:12.5px;font-weight:normal;color:#2e2e2e;transform:scaleX(0.9339);text-decoration:underline;">BND0001844</div>
<div style="position:absolute;left:777px;top:618px;width:8px;height:8px;background:#f2008c;border-radius:50%"></div>
<div class="t" style="left:791.4px;top:612px;font-size:12.5px;font-weight:normal;color:#2e2e2e;transform:scaleX(1.0246);">Outbound</div>
<div class="t" style="left:889.8px;top:603px;font-size:12.5px;font-weight:normal;color:#2e2e2e;transform:scaleX(1.0532);text-decoration:underline;">Incident:</div>
<div class="t" style="left:889.9px;top:621px;font-size:12.5px;font-weight:normal;color:#2e2e2e;transform:scaleX(0.9356);text-decoration:underline;">INC0010660</div>
<div style="position:absolute;left:1009px;top:618px;width:8px;height:8px;background:#03bb3f;border-radius:50%"></div>
<div class="t" style="left:1023.3px;top:612px;font-size:12.5px;font-weight:normal;color:#2e2e2e;transform:scaleX(0.9995);">Complete</div>
<div style="position:absolute;left:1159px;top:618px;width:8px;height:8px;background:#03bb3f;border-radius:50%"></div>
<div class="t" style="left:1172.8px;top:612px;font-size:12.5px;font-weight:normal;color:#2e2e2e;transform:scaleX(0.9710);">Accepted</div>
<div class="t" style="left:1290.3px;top:603px;font-size:12.5px;font-weight:normal;color:#2e2e2e;transform:scaleX(0.9515);">12-08-2021</div>
<div class="t" style="left:1290.3px;top:621px;font-size:12.5px;font-weight:normal;color:#2e2e2e;transform:scaleX(0.9525);">16:50:48</div>
<div style="position:absolute;left:0px;top:647px;width:1390px;height:48px;background:#f4f4f4"></div>
<div style="position:absolute;left:14px;top:661px;width:20px;height:20px;background:#fff;border:1px solid #cccccc;border-radius:3px;box-sizing:border-box"></div>
<svg style="position:absolute;left:68px;top:662px" width="19" height="19" viewBox="0 0 19 19">
<circle cx="9.47" cy="9.9" r="8.6" fill="none" stroke="#00857a" stroke-width="1.15"/>
<circle cx="9.47" cy="6.0" r="1.0" fill="#00857a"/><rect x="8.5" y="8.9" width="1.95" height="6.8" fill="#00857a"/></svg>
<div class="t" style="left:112.7px;top:661px;font-size:12.5px;font-weight:normal;color:#2e2e2e;transform:scaleX(0.9213);text-decoration:underline;">TXN0000003826.01</div>
<div class="t" style="left:406.0px;top:661px;font-size:12.5px;font-weight:normal;color:#2e2e2e;transform:scaleX(0.9864);text-decoration:underline;">CreateIncident</div>
<div class="t" style="left:557.0px;top:661px;font-size:12.5px;font-weight:normal;color:#2e2e2e;transform:scaleX(0.9864);text-decoration:underline;">Push-Pull Incident</div>
<div class="t" style="left:678.8px;top:661px;font-size:12.5px;font-weight:normal;color:#2e2e2e;transform:scaleX(0.9362);text-decoration:underline;">BND0001843</div>
<div style="position:absolute;left:777px;top:667px;width:8px;height:8px;background:#f2008c;border-radius:50%"></div>
<div class="t" style="left:791.4px;top:661px;font-size:12.5px;font-weight:normal;color:#2e2e2e;transform:scaleX(1.0246);">Outbound</div>
<div class="t" style="left:889.8px;top:652px;font-size:12.5px;font-weight:normal;color:#2e2e2e;transform:scaleX(1.0532);text-decoration:underline;">Incident:</div>
<div class="t" style="left:889.9px;top:670px;font-size:12.5px;font-weight:normal;color:#2e2e2e;transform:scaleX(0.9370);text-decoration:underline;">INC0010659</div>
<div style="position:absolute;left:1009px;top:667px;width:8px;height:8px;background:#03bb3f;border-radius:50%"></div>
<div class="t" style="left:1023.3px;top:661px;font-size:12.5px;font-weight:normal;color:#2e2e2e;transform:scaleX(0.9995);">Complete</div>
<div style="position:absolute;left:1159px;top:667px;width:8px;height:8px;background:#03bb3f;border-radius:50%"></div>
<div class="t" style="left:1172.8px;top:661px;font-size:12.5px;font-weight:normal;color:#2e2e2e;transform:scaleX(0.9710);">Accepted</div>
<div class="t" style="left:1290.3px;top:652px;font-size:12.5px;font-weight:normal;color:#2e2e2e;transform:scaleX(0.9515);">12-08-2021</div>
<div class="t" style="left:1290.3px;top:670px;font-size:12.5px;font-weight:normal;color:#2e2e2e;transform:scaleX(0.9543);">16:37:52</div>
<div style="position:absolute;left:14px;top:712px;width:20px;height:20px;background:#fff;border:1px solid #cccccc;border-radius:3px;box-sizing:border-box"></div>
<div style="position:absolute;left:57px;top:706px;width:121px;height:32px;background:#00857a;border:1px solid #034a40;border-radius:3px;box-sizing:border-box"></div>
<div class="t" style="left:66.5px;top:712px;font-size:12.5px;font-weight:bold;color:#fff;transform:scaleX(0.9134);-webkit-text-stroke:0.1px #fff;">Ignore Transaction</div>
<div style="position:absolute;left:186px;top:706px;width:124px;height:32px;background:#00857a;border:1px solid #034a40;border-radius:3px;box-sizing:border-box"></div>
<div class="t" style="left:195.8px;top:712px;font-size:12.5px;font-weight:bold;color:#fff;transform:scaleX(0.9076);-webkit-text-stroke:0.1px #fff;">Replay Transaction</div>
<div style="position:absolute;left:314px;top:706px;width:199px;height:32px;background:#fff;border:1px solid #c9cccf;border-radius:3px;box-sizing:border-box"></div>
<div class="t" style="left:327.9px;top:712px;font-size:11.5px;font-weight:normal;color:#1f2b48;transform:scaleX(0.8776);">Actions on selected rows...</div>
<svg style="position:absolute;left:498px;top:719px" width="10" height="7"><path d="M1 1L5 5L9 1" fill="none" stroke="#222" stroke-width="1.8"/></svg>
<svg style="position:absolute;left:1126px;top:716px" width="25" height="12"><path d="M0.5 6L11 0V12Z M13.3 6L23.8 0V12Z" fill="#bfc0c1"/></svg>
<svg style="position:absolute;left:1163px;top:716px" width="11" height="12"><path d="M0 6L11 0V12Z" fill="#bfc0c1"/></svg>
<div style="position:absolute;left:1195px;top:712px;width:52px;height:21px;background:#e4e8eb;border:1px solid #c9cccf;border-radius:3px;box-sizing:border-box"></div>
<div class="t" style="left:1229.5px;top:713px;font-size:12.5px;font-weight:normal;color:#3d4f5c;transform:scaleX(1.0205);">1</div>
<div class="t" style="left:1254.3px;top:713px;font-size:12.5px;font-weight:normal;color:#2e2e2e;transform:scaleX(1.0124);">to 11 of 11</div>
<svg style="position:absolute;left:1333px;top:716px" width="11" height="12"><path d="M11 6L0 0V12Z" fill="#bfc0c1"/></svg>
<svg style="position:absolute;left:1357px;top:716px" width="25" height="12"><path d="M10.5 6L0 0V12Z M23.3 6L12.8 0V12Z" fill="#bfc0c1"/></svg>
<svg style="position:absolute;left:1345px;top:748px" width="20" height="22" viewBox="0 0 20 22">
<circle cx="9.4" cy="13" r="7.8" fill="none" stroke="#1f1f1f" stroke-width="1.25"/>
<circle cx="9.4" cy="2.9" r="1.15" fill="#1f1f1f"/>
<path d="M9.4 7.2V14" stroke="#1f1f1f" stroke-width="1.2"/>
<path d="M8.1 13.3H10.7L9.4 15.9Z" fill="#1f1f1f"/>
<path d="M15.4 4L19 6.9L16 7.1Z" fill="#1f1f1f"/></svg>
<div style="position:absolute;left:1383px;top:408px;width:3px;height:377px;background:#b8b8b8"></div>
</body></html>
